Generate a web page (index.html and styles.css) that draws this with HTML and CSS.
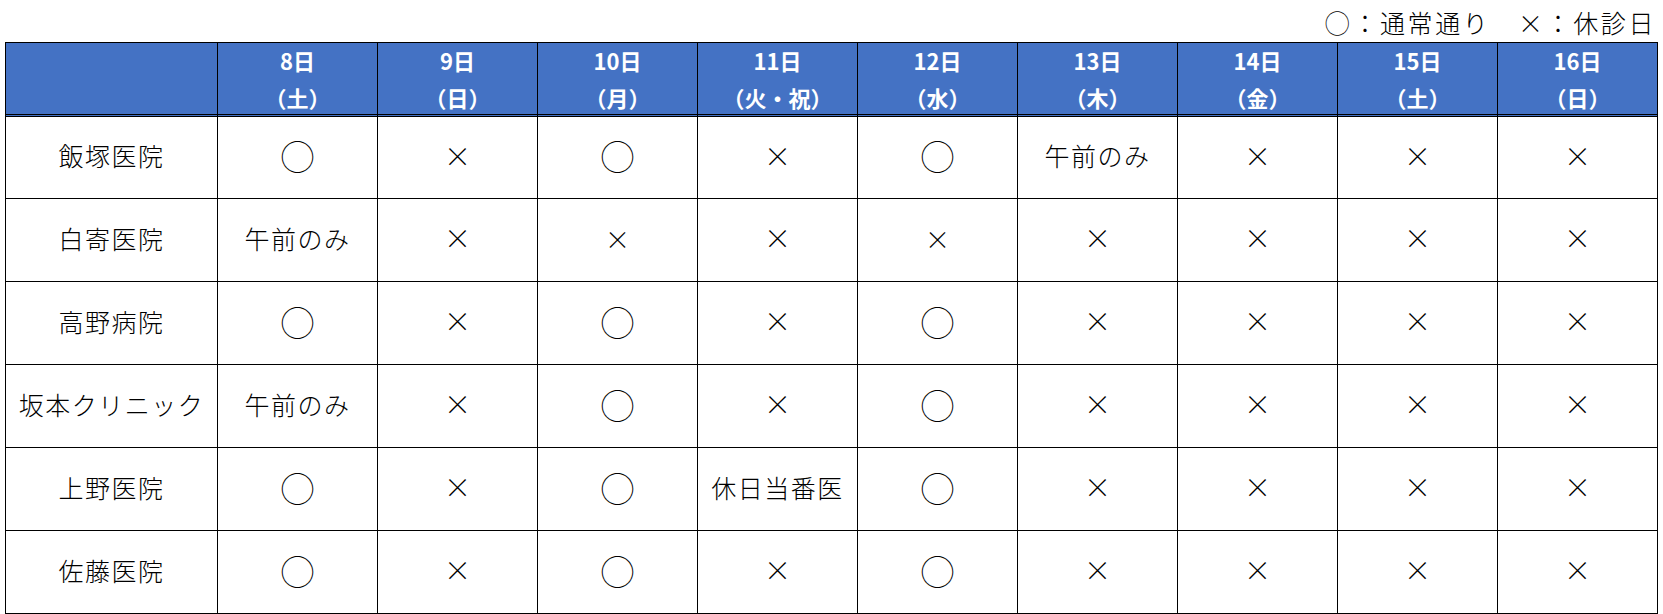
FILE: index.html
```html
<!DOCTYPE html>
<html lang="ja">
<head>
<meta charset="utf-8">
<title>診療日程</title>
<link rel="stylesheet" href="styles.css">
</head>
<body>
<div class="legend">◯：通常通り　×：休診日</div>
<div class="grid">
  <div class="cell head"></div>
  <div class="cell head"><span>8日</span><span>（土）</span></div>
  <div class="cell head"><span>9日</span><span>（日）</span></div>
  <div class="cell head"><span>10日</span><span>（月）</span></div>
  <div class="cell head"><span>11日</span><span>（火・祝）</span></div>
  <div class="cell head"><span>12日</span><span>（水）</span></div>
  <div class="cell head"><span>13日</span><span>（木）</span></div>
  <div class="cell head"><span>14日</span><span>（金）</span></div>
  <div class="cell head"><span>15日</span><span>（土）</span></div>
  <div class="cell head"><span>16日</span><span>（日）</span></div>

  <div class="cell name r1">飯塚医院</div>
  <div class="cell r1 o">◯</div>
  <div class="cell r1 x">×</div>
  <div class="cell r1 o">◯</div>
  <div class="cell r1 x">×</div>
  <div class="cell r1 o">◯</div>
  <div class="cell r1">午前のみ</div>
  <div class="cell r1 x">×</div>
  <div class="cell r1 x">×</div>
  <div class="cell r1 x">×</div>

  <div class="cell name">白寄医院</div>
  <div class="cell">午前のみ</div>
  <div class="cell x">×</div>
  <div class="cell x sm">×</div>
  <div class="cell x">×</div>
  <div class="cell x sm">×</div>
  <div class="cell x">×</div>
  <div class="cell x">×</div>
  <div class="cell x">×</div>
  <div class="cell x">×</div>

  <div class="cell name">高野病院</div>
  <div class="cell o">◯</div>
  <div class="cell x">×</div>
  <div class="cell o">◯</div>
  <div class="cell x">×</div>
  <div class="cell o">◯</div>
  <div class="cell x">×</div>
  <div class="cell x">×</div>
  <div class="cell x">×</div>
  <div class="cell x">×</div>

  <div class="cell name">坂本クリニック</div>
  <div class="cell">午前のみ</div>
  <div class="cell x">×</div>
  <div class="cell o">◯</div>
  <div class="cell x">×</div>
  <div class="cell o">◯</div>
  <div class="cell x">×</div>
  <div class="cell x">×</div>
  <div class="cell x">×</div>
  <div class="cell x">×</div>

  <div class="cell name">上野医院</div>
  <div class="cell o">◯</div>
  <div class="cell x">×</div>
  <div class="cell o">◯</div>
  <div class="cell">休日当番医</div>
  <div class="cell o">◯</div>
  <div class="cell x">×</div>
  <div class="cell x">×</div>
  <div class="cell x">×</div>
  <div class="cell x">×</div>

  <div class="cell name">佐藤医院</div>
  <div class="cell o">◯</div>
  <div class="cell x">×</div>
  <div class="cell o">◯</div>
  <div class="cell x">×</div>
  <div class="cell o">◯</div>
  <div class="cell x">×</div>
  <div class="cell x">×</div>
  <div class="cell x">×</div>
  <div class="cell x">×</div>
</div>
</body>
</html>
```

FILE: styles.css
```css
* { box-sizing: border-box; }
html, body {
  margin: 0;
  padding: 0;
  background: #fff;
}
body {
  font-family: "Noto Sans CJK JP", "Noto Sans", sans-serif;
  font-weight: 300;
  color: #000;
  width: 1663px;
}
.legend {
  height: 42px;
  line-height: 44px;
  font-size: 25px;
  text-align: right;
  padding-right: 7px;
  letter-spacing: 2.6px;
}
.grid {
  margin-left: 5px;
  display: grid;
  grid-template-columns: 212px repeat(9, 160px);
  grid-template-rows: 74px 82px repeat(5, 83px);
  width: 1653px;
  border-left: 1px solid #000;
  border-top: 1px solid #000;
}
.cell {
  border-right: 1px solid #000;
  border-bottom: 1px solid #000;
  display: flex;
  align-items: center;
  justify-content: center;
  font-size: 25px;
  letter-spacing: 1.5px;
  padding-bottom: 5px;
}
.head {
  background: #4472c4;
  color: #fff;
  font-weight: bold;
  font-size: 22px;
  letter-spacing: 0;
  flex-direction: column;
  border-bottom: 3px double #000;
  line-height: 37px;
  padding-bottom: 0;
}
.head span { display: block; }
.o {
  font-size: 34px;
  letter-spacing: 0;
  padding-bottom: 4px;
}
.x {
  font-size: 27px;
  letter-spacing: 0;
}
.x.sm { font-size: 25px; }
```
